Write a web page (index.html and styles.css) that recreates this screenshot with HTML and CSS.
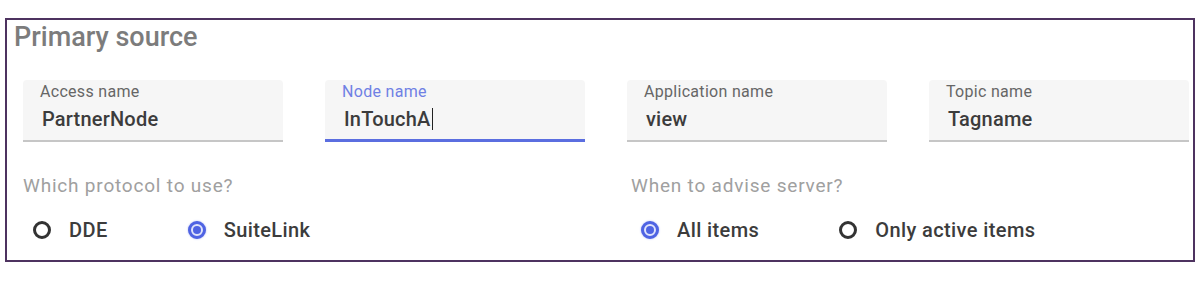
FILE: index.html
```html
<!DOCTYPE html>
<html lang="en">
<head>
  <meta charset="UTF-8">
  <meta name="viewport" content="width=device-width, initial-scale=1.0">
  <title>Primary source</title>
  <link rel="stylesheet" href="styles.css">
</head>
<body>

  <div class="panel">
    <h2 class="title">Primary source</h2>

    <div class="fields">
      <div class="field">
        <span class="label">Access name</span>
        <span class="value">PartnerNode</span>
      </div>
      <div class="field focused">
        <span class="label">Node name</span>
        <span class="value">InTouchA<span class="caret"></span></span>
      </div>
      <div class="field">
        <span class="label">Application name</span>
        <span class="value">view</span>
      </div>
      <div class="field">
        <span class="label">Topic name</span>
        <span class="value">Tagname</span>
      </div>
    </div>

    <div class="options">
      <div class="group">
        <p class="question">Which protocol to use?</p>
        <div class="choices">
          <label class="choice"><span class="radio"></span>DDE</label>
          <label class="choice"><span class="radio checked"></span>SuiteLink</label>
        </div>
      </div>
      <div class="group">
        <p class="question">When to advise server?</p>
        <div class="choices">
          <label class="choice"><span class="radio checked"></span>All items</label>
          <label class="choice"><span class="radio"></span>Only active items</label>
        </div>
      </div>
    </div>
  </div>

</body>
</html>
```

FILE: styles.css
```css
body { margin: 0; background: #fff; font-family: Roboto, "Liberation Sans", sans-serif; }

.panel {
  margin: 18px 5px 0;
  height: 240px;
  border: 2px solid #4e3360;
}

.title {
  margin: 0;
  padding: 2px 0 0 7px;
  font-size: 27px;
  line-height: 31px;
  font-weight: 500;
  color: #7c7c7c;
}

/* text fields */
.fields {
  display: grid;
  grid-template-columns: repeat(4, 260px);
  column-gap: 42px;
  margin-top: 27px;
  padding-left: 16px;
}
.field {
  display: flex;
  flex-direction: column;
  height: 62px;
  padding: 3px 0 0 17px;
  box-sizing: border-box;
  background: #f6f6f6;
  border-radius: 4px 4px 0 0;
  border-bottom: 2px solid #c6c6c6;
}
.field.focused { border-bottom: 3px solid #5b6ee0; }
.label { font-size: 16px; line-height: 18px; color: #666; letter-spacing: 0.3px; }
.focused .label { color: #6f80e4; }
.value {
  margin-top: 4px;
  padding-left: 2px;
  font-size: 20px;
  line-height: 28px;
  font-weight: 500;
  color: #3c3c3c;
  letter-spacing: 0.2px;
}
.caret {
  display: inline-block;
  width: 1px;
  height: 22px;
  margin-left: 1px;
  vertical-align: -4px;
  background: #222;
}

/* radio groups */
.options {
  display: grid;
  grid-template-columns: 562px 562px;
  column-gap: 42px;
  margin-top: 33px;
  padding-left: 16px;
}
.options .group + .group { padding-left: 4px; }
.question { margin: 0; font-size: 19px; line-height: 22px; color: #a0a0a0; letter-spacing: 0.8px; }
.choices { display: flex; gap: 80px; margin-top: 21px; padding-left: 10px; }
.choice {
  display: flex;
  align-items: center;
  gap: 18px;
  font-size: 20px;
  line-height: 24px;
  font-weight: 500;
  color: #3c3c3c;
  letter-spacing: 0.4px;
}
.radio {
  width: 18px;
  height: 18px;
  box-sizing: border-box;
  border: 3px solid #333;
  border-radius: 50%;
  position: relative;
}
.radio.checked { border-color: #4f63e3; background: #dfe3fb; box-shadow: 0 0 2px #a8b2f0; }
.radio.checked::after {
  content: "";
  position: absolute;
  left: 2px;
  top: 2px;
  width: 8px;
  height: 8px;
  border-radius: 50%;
  background: #4f63e3;
}
```
